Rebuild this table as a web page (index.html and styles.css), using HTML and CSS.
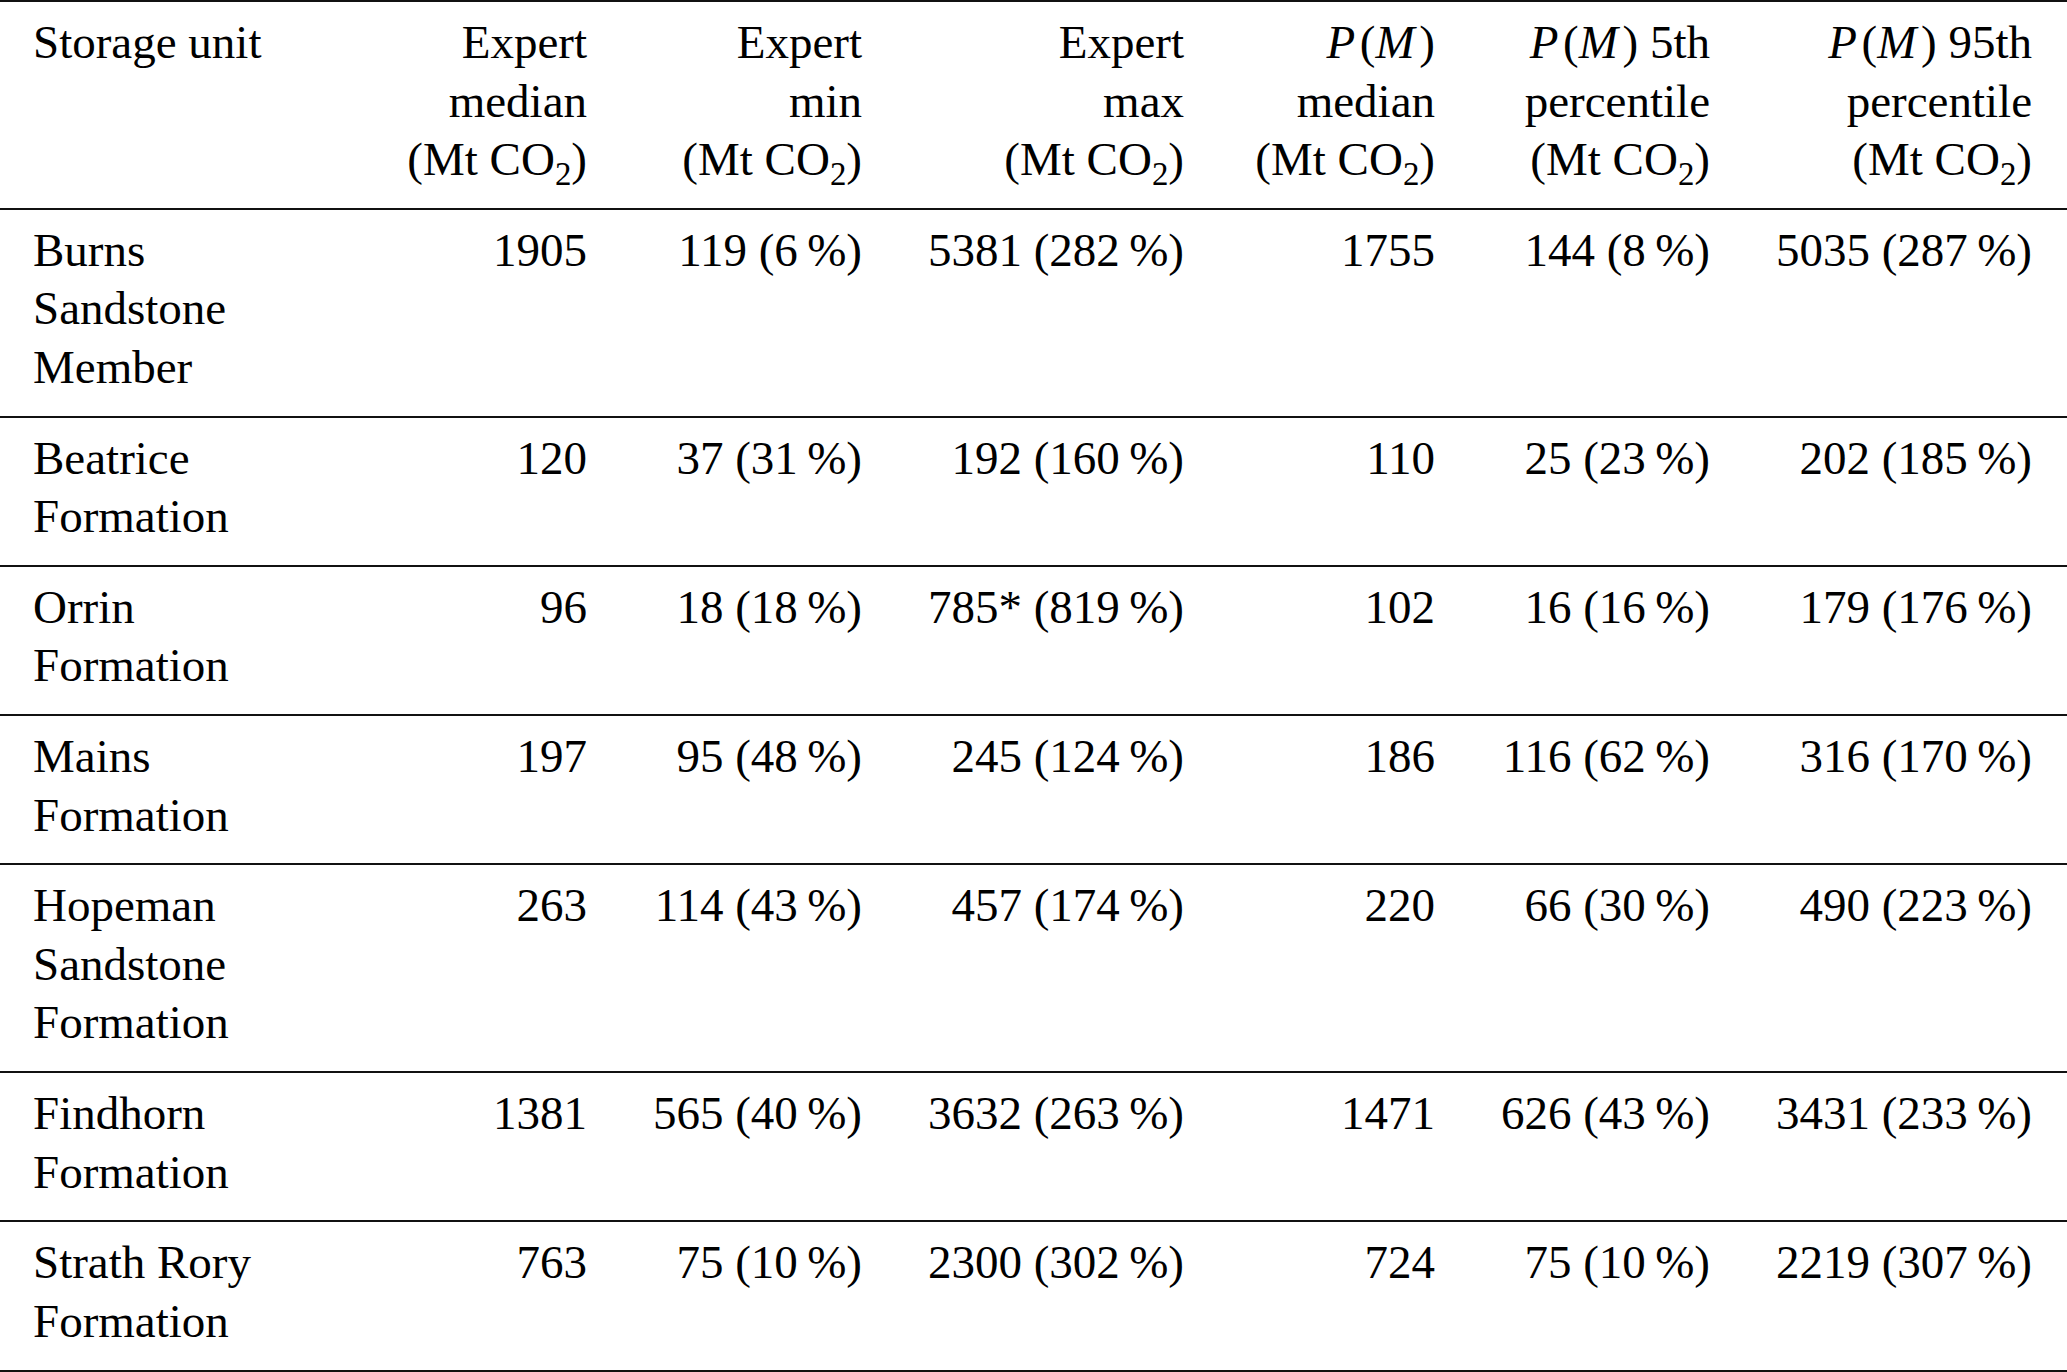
FILE: index.html
```html
<!DOCTYPE html>
<html lang="en">
<head>
<meta charset="utf-8">
<title>Storage unit estimates</title>
<link rel="stylesheet" href="styles.css">
</head>
<body>
<table class="data">
  <colgroup>
    <col class="c1"><col class="c2"><col class="c3"><col class="c4"><col class="c5"><col class="c6"><col class="c7">
  </colgroup>
  <thead>
    <tr>
      <th class="name">Storage unit</th>
      <th>Expert<br>median<br>(Mt CO<sub>2</sub>)</th>
      <th>Expert<br>min<br>(Mt CO<sub>2</sub>)</th>
      <th>Expert<br>max<br>(Mt CO<sub>2</sub>)</th>
      <th><span class="pm"><i>P</i>(<i>M</i>)</span><br>median<br>(Mt CO<sub>2</sub>)</th>
      <th><span class="pm"><i>P</i>(<i>M</i>)</span> 5th<br>percentile<br>(Mt CO<sub>2</sub>)</th>
      <th><span class="pm"><i>P</i>(<i>M</i>)</span> 95th<br>percentile<br>(Mt CO<sub>2</sub>)</th>
    </tr>
  </thead>
  <tbody>
    <tr>
      <td class="name">Burns<br>Sandstone<br>Member</td>
      <td>1905</td><td>119 (6&#8201;%)</td><td>5381 (282&#8201;%)</td><td>1755</td><td>144 (8&#8201;%)</td><td>5035 (287&#8201;%)</td>
    </tr>
    <tr>
      <td class="name">Beatrice<br>Formation</td>
      <td>120</td><td>37 (31&#8201;%)</td><td>192 (160&#8201;%)</td><td>110</td><td>25 (23&#8201;%)</td><td>202 (185&#8201;%)</td>
    </tr>
    <tr>
      <td class="name">Orrin<br>Formation</td>
      <td>96</td><td>18 (18&#8201;%)</td><td>785* (819&#8201;%)</td><td>102</td><td>16 (16&#8201;%)</td><td>179 (176&#8201;%)</td>
    </tr>
    <tr>
      <td class="name">Mains<br>Formation</td>
      <td>197</td><td>95 (48&#8201;%)</td><td>245 (124&#8201;%)</td><td>186</td><td>116 (62&#8201;%)</td><td>316 (170&#8201;%)</td>
    </tr>
    <tr>
      <td class="name">Hopeman<br>Sandstone<br>Formation</td>
      <td>263</td><td>114 (43&#8201;%)</td><td>457 (174&#8201;%)</td><td>220</td><td>66 (30&#8201;%)</td><td>490 (223&#8201;%)</td>
    </tr>
    <tr>
      <td class="name">Findhorn<br>Formation</td>
      <td>1381</td><td>565 (40&#8201;%)</td><td>3632 (263&#8201;%)</td><td>1471</td><td>626 (43&#8201;%)</td><td>3431 (233&#8201;%)</td>
    </tr>
    <tr>
      <td class="name">Strath Rory<br>Formation</td>
      <td>763</td><td>75 (10&#8201;%)</td><td>2300 (302&#8201;%)</td><td>724</td><td>75 (10&#8201;%)</td><td>2219 (307&#8201;%)</td>
    </tr>
  </tbody>
</table>
</body>
</html>
```
FILE: styles.css
```css
html, body {
  margin: 0;
  padding: 0;
  background: #ffffff;
}

body {
  font-family: "Liberation Serif", "Times New Roman", serif;
  font-size: 47px;
  line-height: 58.5px;
  color: #000000;
}

.data {
  width: 2067px;
  table-layout: fixed;
  border-collapse: collapse;
  border-top: 2px solid #111111;
}

.c1 { width: 330px; }
.c2 { width: 273px; }
.c3 { width: 275px; }
.c4 { width: 322px; }
.c5 { width: 251px; }
.c6 { width: 275px; }
.c7 { width: 341px; }

.data th,
.data td {
  font-weight: normal;
  text-align: right;
  vertical-align: top;
  padding: 11px 16px 19.25px 16px;
  white-space: nowrap;
}

.data tr {
  border-bottom: 2px solid #111111;
}

.data th:last-child,
.data td:last-child {
  padding-right: 35px;
}

.data .name {
  text-align: left;
  padding-left: 33px;
}

.data sub {
  font-size: 0.7em;
  line-height: 0;
  vertical-align: -0.3em;
}

.pm i {
  font-style: italic;
  margin-right: 0.1em;
}
```
